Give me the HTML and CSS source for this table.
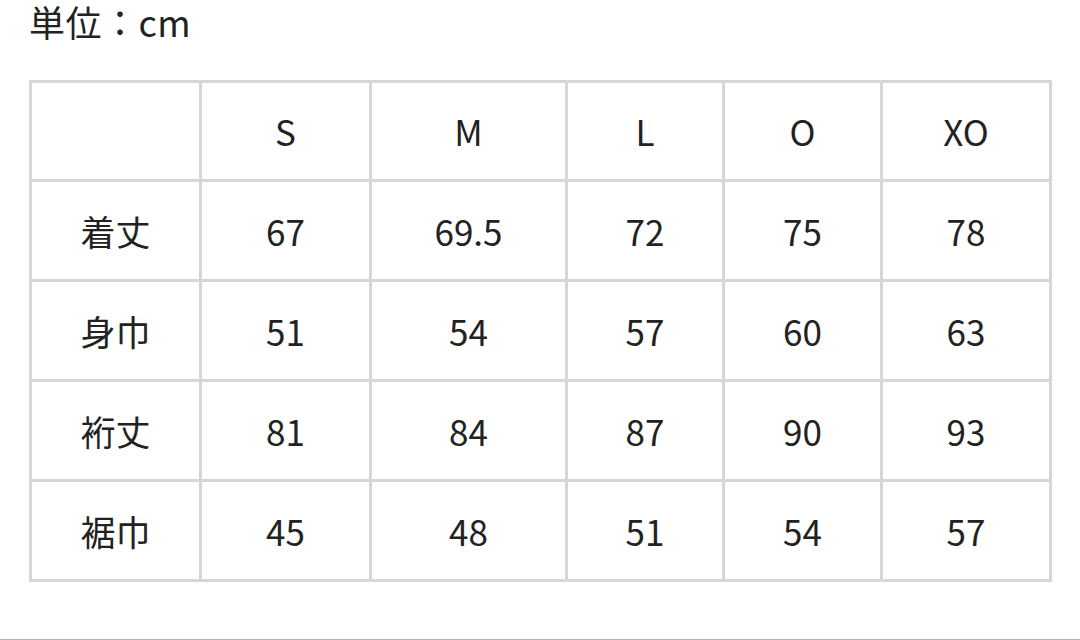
FILE: index.html
```html
<!DOCTYPE html>
<html lang="ja">
<head>
<meta charset="utf-8">
<link rel="stylesheet" href="styles.css">
</head>
<body>
<div class="page">
  <div class="unit">単位：cm</div>
  <table class="size-table">
    <colgroup>
      <col class="c1"><col class="c2"><col class="c3"><col class="c4"><col class="c5"><col class="c6">
    </colgroup>
    <tr class="head"><td></td><td>S</td><td>M</td><td>L</td><td>O</td><td>XO</td></tr>
    <tr><td>着丈</td><td>67</td><td>69.5</td><td>72</td><td>75</td><td>78</td></tr>
    <tr><td>身巾</td><td>51</td><td>54</td><td>57</td><td>60</td><td>63</td></tr>
    <tr><td>裄丈</td><td>81</td><td>84</td><td>87</td><td>90</td><td>93</td></tr>
    <tr><td>裾巾</td><td>45</td><td>48</td><td>51</td><td>54</td><td>57</td></tr>
  </table>
  <div class="bottom-line"></div>
</div>
</body>
</html>
```

FILE: styles.css
```css
html, body {
  margin: 0;
  padding: 0;
  background: #ffffff;
}
.page {
  width: 1080px;
  height: 640px;
  overflow: hidden;
  font-family: "Noto Sans CJK JP", "Noto Sans", sans-serif;
  color: #222222;
}
.unit {
  padding-left: 29px;
  font-size: 36px;
  line-height: 42px;
  height: 42px;
  letter-spacing: 0.5px;
}
.size-table {
  margin-top: 38px;
  margin-left: 29px;
  border-collapse: collapse;
  table-layout: fixed;
  width: 1020px;
  border: 3px solid #d6d6d6;
}
.size-table td {
  border: 3px solid #d6d6d6;
  height: 97px;
  padding: 0;
  text-align: center;
  vertical-align: middle;
  font-size: 35px;
  line-height: 40px;
}
.size-table .head td {
  height: 96px;
}
.c1 { width: 170px; }
.c2 { width: 170px; }
.c3 { width: 196px; }
.c4 { width: 157px; }
.c5 { width: 158px; }
.c6 { width: 169px; }
.bottom-line {
  margin-top: 57px;
  height: 2px;
  background: #b4b4b4;
}
```
